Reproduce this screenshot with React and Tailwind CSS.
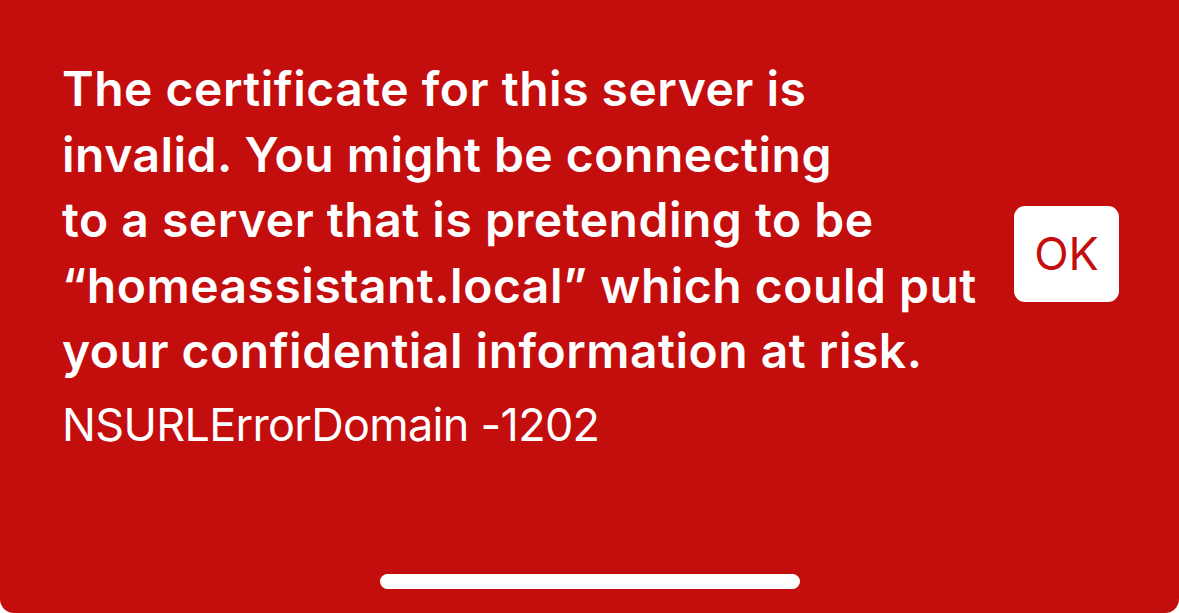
export default function App() {
  const lines = [
    "The certificate for this server is",
    "invalid. You might be connecting",
    "to a server that is pretending to be",
    "\u201Chomeassistant.local\u201D which could put",
    "your confidential information at risk.",
  ];
  return (
    <div className="w-[1179px] h-[613px] bg-white" style={{ fontFamily: "Inter, 'Noto Sans', sans-serif" }}>
      <div className="w-full h-full bg-[#c40d0d] rounded-b-[14px] flex flex-col">
        <div className="flex items-center justify-between pl-[62px] pr-[60px] pt-[56px]">
          <div className="flex flex-col text-white">
            <div className="text-[48px] leading-[65.5px] font-semibold tracking-[0.5px] whitespace-nowrap">
              {lines.map((l, i) => (
                <div key={i}>{l}</div>
              ))}
            </div>
            <div className="mt-[14px] text-[45px] leading-[54px] font-normal tracking-[-0.7px] whitespace-nowrap">
              NSURLErrorDomain -1202
            </div>
          </div>
          <div className="w-[105px] h-[96px] bg-white rounded-[11px] flex items-center justify-center text-[#c40d0d] text-[45px] leading-none">
            OK
          </div>
        </div>
        <div className="flex-1" />
        <div className="flex justify-center mb-[24px]">
          <div className="w-[420px] h-[15px] bg-white rounded-full" />
        </div>
      </div>
    </div>
  );
}
